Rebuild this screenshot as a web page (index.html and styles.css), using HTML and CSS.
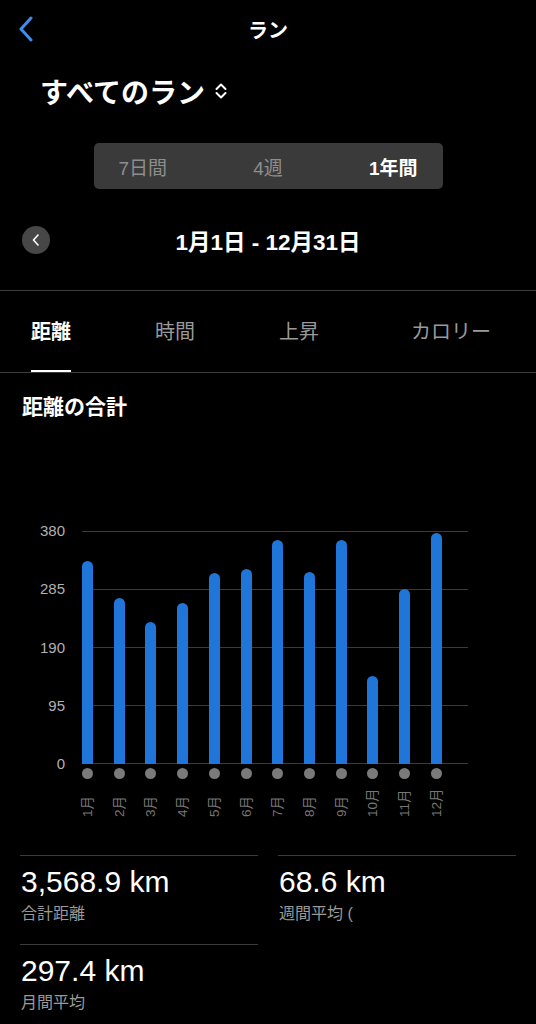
FILE: index.html
```html
<!DOCTYPE html>
<html lang="ja">
<head>
  <meta charset="UTF-8">
  <title>ラン</title>
  <meta name="viewport" content="width=device-width, initial-scale=1.0">
  <link rel="stylesheet" href="styles.css">
</head>
<body>

<header class="topbar">
  <a class="back" href="#">
    <svg width="16" height="26" viewBox="0 0 16 26"><path d="M13 2 L3 13 L13 24" fill="none" stroke="#3e8ef0" stroke-width="3" stroke-linecap="round" stroke-linejoin="round"/></svg>
  </a>
  <div class="title">ラン</div>
  <span></span>
</header>

<div class="picker">
  <span>すべてのラン</span>
  <svg width="14" height="18" viewBox="0 0 14 18"><path d="M2.5 7 L7 2.5 L11.5 7 M2.5 11 L7 15.5 L11.5 11" fill="none" stroke="#fff" stroke-width="2" stroke-linecap="round" stroke-linejoin="round"/></svg>
</div>

<div class="segment">
  <span>7日間</span>
  <span>4週</span>
  <span class="on">1年間</span>
</div>

<div class="range">
  <button class="prev">
    <svg width="8" height="12" viewBox="0 0 8 12"><path d="M6 1 L1.5 6 L6 11" fill="none" stroke="#fff" stroke-width="1.6" stroke-linecap="round" stroke-linejoin="round"/></svg>
  </button>
  <div class="dates">1月1日 - 12月31日</div>
  <span></span>
</div>

<nav class="tabs">
  <a href="#" class="tab on">距離</a>
  <a href="#" class="tab">時間</a>
  <a href="#" class="tab">上昇</a>
  <a href="#" class="tab last">カロリー</a>
</nav>

<h2 class="section">距離の合計</h2>

<div class="chart">
  <div class="yaxis">
    <span>380</span>
    <span>285</span>
    <span>190</span>
    <span>95</span>
    <span>0</span>
  </div>
  <div class="plot">
    <div class="bars">
      <div class="bar" style="height:203px"></div>
      <div class="bar" style="height:166px"></div>
      <div class="bar" style="height:142px"></div>
      <div class="bar" style="height:161px"></div>
      <div class="bar" style="height:191px"></div>
      <div class="bar" style="height:195px"></div>
      <div class="bar" style="height:224px"></div>
      <div class="bar" style="height:192px"></div>
      <div class="bar" style="height:224px"></div>
      <div class="bar" style="height:88px"></div>
      <div class="bar" style="height:175px"></div>
      <div class="bar" style="height:231px"></div>
    </div>
    <div class="dots">
      <i></i><i></i><i></i><i></i><i></i><i></i><i></i><i></i><i></i><i></i><i></i><i></i>
    </div>
    <div class="months">
      <span>1月</span><span>2月</span><span>3月</span><span>4月</span><span>5月</span><span>6月</span>
      <span>7月</span><span>8月</span><span>9月</span><span>10月</span><span>11月</span><span>12月</span>
    </div>
  </div>
</div>

<div class="stats">
  <div class="stat">
    <div class="num">3,568.9 km</div>
    <div class="label">合計距離</div>
  </div>
  <div class="stat">
    <div class="num">68.6 km</div>
    <div class="label">週間平均 (</div>
  </div>
  <div class="stat">
    <div class="num">297.4 km</div>
    <div class="label">月間平均</div>
  </div>
</div>

</body>
</html>
```

FILE: styles.css
```css
body {
  margin: 0;
  background: #000;
  color: #fff;
  font-family: "Liberation Sans", "Noto Sans CJK JP", sans-serif;
}
.topbar {
  display: grid;
  grid-template-columns: 60px 1fr 60px;
  align-items: center;
  height: 58px;
}
.back {
  display: flex;
  padding-left: 18px;
}
.title {
  text-align: center;
  font-size: 20px;
  font-weight: bold;
}
.picker {
  height: 66px;
  display: flex;
  align-items: center;
  gap: 9px;
  padding-left: 40px;
  font-size: 28px;
  font-weight: bold;
}
.segment {
  box-sizing: border-box;
  width: 349px;
  height: 46px;
  margin: 19px auto 0;
  padding: 0 25px;
  background: #3a3a3a;
  border-radius: 5px;
  display: flex;
  justify-content: space-between;
  align-items: center;
  font-size: 19px;
  color: #8e8e8e;
}
.segment .on {
  color: #fff;
  font-weight: bold;
}
.range {
  display: grid;
  grid-template-columns: 28px 1fr 28px;
  align-items: center;
  height: 39px;
  padding: 31px 22px;
  border-bottom: 1px solid #3d3d3d;
}
.prev {
  width: 28px;
  height: 28px;
  padding: 0;
  border: none;
  border-radius: 50%;
  background: #474747;
  display: flex;
  align-items: center;
  justify-content: center;
}
.dates {
  text-align: center;
  font-size: 22.5px;
  font-weight: bold;
}
.tabs {
  display: flex;
  gap: 84px;
  padding: 0 45px 0 31px;
  border-bottom: 1px solid #3d3d3d;
}
.tab {
  height: 79px;
  display: flex;
  align-items: center;
  border-bottom: 2px solid transparent;
  font-size: 20px;
  color: #9a9a9a;
  text-decoration: none;
}
.tab.on {
  color: #fff;
  font-weight: bold;
  border-bottom-color: #fff;
}
.tab.last {
  margin-left: auto;
}
.section {
  margin: 20px 0 0 22px;
  font-size: 21px;
  line-height: 28px;
  font-weight: bold;
}
.chart {
  display: flex;
  align-items: flex-start;
  margin-top: 110px;
}
.yaxis {
  width: 65px;
  height: 249px;
  margin-top: -8px;
  display: flex;
  flex-direction: column;
  justify-content: space-between;
  align-items: flex-end;
  font-size: 15px;
  line-height: 16px;
  color: #b0b0b0;
}
.plot {
  width: 386px;
  margin-left: 17px;
}
.bars, .dots, .months {
  display: flex;
  justify-content: space-between;
  padding-right: 26px;
}
.bars {
  height: 233px;
  align-items: flex-end;
  background: repeating-linear-gradient(to bottom, #3a3a3a 0 1px, transparent 1px 58px);
}
.bar {
  width: 11px;
  background: #1f76d8;
  border-radius: 6px 6px 0 0;
}
.dots {
  margin-top: 4px;
}
.dots i {
  width: 11px;
  height: 11px;
  border-radius: 50%;
  background: #7a7a7a;
}
.months {
  margin-top: 12px;
}
.months span {
  width: 11px;
  height: 26px;
  writing-mode: vertical-rl;
  text-orientation: sideways;
  transform: rotate(180deg);
  font-size: 13.5px;
  line-height: 11px;
  white-space: nowrap;
  color: #777;
}
.stats {
  display: grid;
  grid-template-columns: 1fr 1fr;
  column-gap: 20px;
  padding: 0 20px;
  margin-top: 38px;
}
.stat {
  border-top: 1px solid #3a3a3a;
  padding: 8px 1px 20px;
}
.num {
  font-size: 30px;
  line-height: 36px;
}
.label {
  margin-top: 4px;
  font-size: 16px;
  line-height: 20px;
  color: #9a9a9a;
}
```
